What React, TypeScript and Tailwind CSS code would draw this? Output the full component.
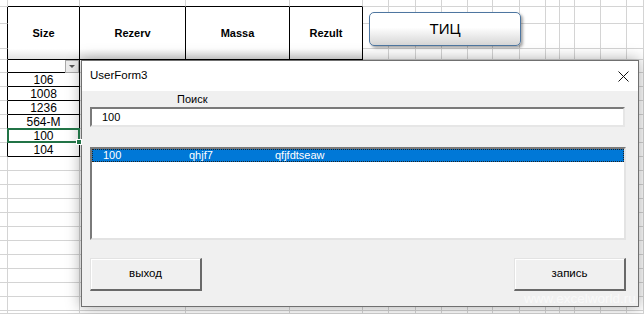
const colW = [8, 72, 106, 104, 73, 26, 27, 26, 26, 25, 27, 26, 14, 15, 26, 26, 17];
const rowCount = 23;
const values: Record<number, string> = { 5: "106", 6: "1008", 7: "1236", 8: "564-M", 9: "100", 10: "104" };
const headers = ["Size", "Rezerv", "Massa", "Rezult"];

function Sheet() {
  const cells = [];
  for (let r = 0; r < rowCount; r++) {
    for (let c = 0; c < colW.length; c++) {
      const inHeader = r >= 1 && r <= 3 && c >= 1 && c <= 4;
      if (inHeader) {
        if (r === 1) {
          cells.push(
            <div
              key={`h${c}`}
              className="row-span-3 flex items-center justify-center border-r border-b border-black bg-linear-to-b from-white from-80% to-[#e3e3e3] text-[11px] font-bold text-black"
            >
              {headers[c - 1]}
            </div>
          );
        }
        continue;
      }
      const tableCell = c === 1 && r >= 4 && r <= 10;
      const blackRight = tableCell || (c === 0 && r >= 1 && r <= 10);
      const blackBottom = tableCell || (r === 0 && c >= 1 && c <= 4);
      cells.push(
        <div
          key={`${r}-${c}`}
          className={`relative border-r border-b ${blackRight ? "border-r-black" : "border-r-[#d4d4d4]"} ${
            blackBottom ? "border-b-black" : "border-b-[#d4d4d4]"
          } flex items-center justify-center text-[12px] leading-none text-black`}
        >
          {tableCell && values[r]}
          {tableCell && r === 4 && (
            <div className="absolute right-0 top-0 flex h-[13px] w-[14px] items-center justify-center border border-[#a8a8a8] bg-[#ececec]">
              <svg width="6" height="4" viewBox="0 0 6 4">
                <polygon points="0,0 6,0 3,3" fill="#555" />
              </svg>
            </div>
          )}
          {tableCell && r === 9 && (
            <>
              <div className="absolute -inset-[1px] z-10 border-2 border-[#217346]" />
              <div className="absolute -bottom-[3px] -right-[3px] z-10 h-[6px] w-[6px] border border-white bg-[#217346]" />
            </>
          )}
        </div>
      );
    }
  }
  return (
    <div className="grid grid-cols-[8px_72px_106px_104px_73px_26px_27px_26px_26px_25px_27px_26px_14px_15px_26px_26px_17px] grid-rows-[7px_17px_25px_11px_13px_14px_14px_14px_14px_14px_14px_14px_14px_14px_14px_14px_14px_14px_14px_14px_14px_14px_3px]">
      {cells}
    </div>
  );
}

function UserForm() {
  return (
    <div className="absolute left-[81px] top-[60px] flex h-[247px] w-[558px] flex-col border border-[#707070] bg-[#f0f0f0] shadow-[0_0_14px_rgba(0,0,0,0.35)]">
      <div className="flex h-[30px] items-center justify-between bg-white pl-[8px] pr-[9px]">
        <span className="text-[11.5px] text-black">UserForm3</span>
        <svg width="11" height="11" viewBox="0 0 11 11">
          <path d="M0.5 0.5 L10.5 10.5 M10.5 0.5 L0.5 10.5" stroke="#111" strokeWidth="1" fill="none" />
        </svg>
      </div>
      <div className="flex flex-col pl-[8px] text-[11px] text-black">
        <div className="h-[16px] pl-[87px] leading-[16px]">Поиск</div>
        <div className="flex h-[20px] w-[535px] items-center border-2 border-t-[#7a7a7a] border-l-[#7a7a7a] border-b-[#e6e6e6] border-r-[#e6e6e6] bg-white pl-[10px]">
          100
        </div>
        <div className="mt-[20px] h-[93px] w-[536px] border-2 border-t-[#7a7a7a] border-l-[#7a7a7a] border-b-[#e3e3e3] border-r-[#e3e3e3] bg-white">
          <div className="flex h-[13px] items-center border border-dotted border-[#222] bg-[#0078d7] pl-[10px] text-white">
            <span className="w-[86px]">100</span>
            <span className="w-[86px]">qhjf7</span>
            <span>qfjfdtseaw</span>
          </div>
        </div>
        <div className="mt-[18px] flex w-[536px] justify-between">
          <button className="h-[33px] w-[112px] border-b-2 border-r-2 border-t border-l border-b-[#696969] border-r-[#696969] border-t-[#e3e3e3] border-l-[#e3e3e3] bg-[#f0f0f0] text-[11.5px] shadow-[inset_1px_1px_0_#fff]">
            выход
          </button>
          <button className="h-[33px] w-[112px] border-b-2 border-r-2 border-t border-l border-b-[#696969] border-r-[#696969] border-t-[#e3e3e3] border-l-[#e3e3e3] bg-[#f0f0f0] text-[11.5px] shadow-[inset_1px_1px_0_#fff]">
            запись
          </button>
        </div>
      </div>
    </div>
  );
}

export default function App() {
  return (
    <div className="relative h-[314px] w-[644px] overflow-hidden bg-white font-['Liberation_Sans',Arial,sans-serif]">
      <Sheet />
      <div className="absolute left-[369px] top-[12px] flex h-[34px] w-[152px] items-center justify-center rounded-[5px] border border-[#4e76a0] bg-linear-to-b from-white from-45% to-[#d6d6d6] text-[15px] text-black shadow-[2px_2px_3px_rgba(0,0,0,0.35)]">
        ТИЦ
      </div>
      <UserForm />
      <div className="absolute left-[524px] top-[291px] text-[13.5px] leading-[16px] text-white/60">www.excelworld.ru</div>
    </div>
  );
}
